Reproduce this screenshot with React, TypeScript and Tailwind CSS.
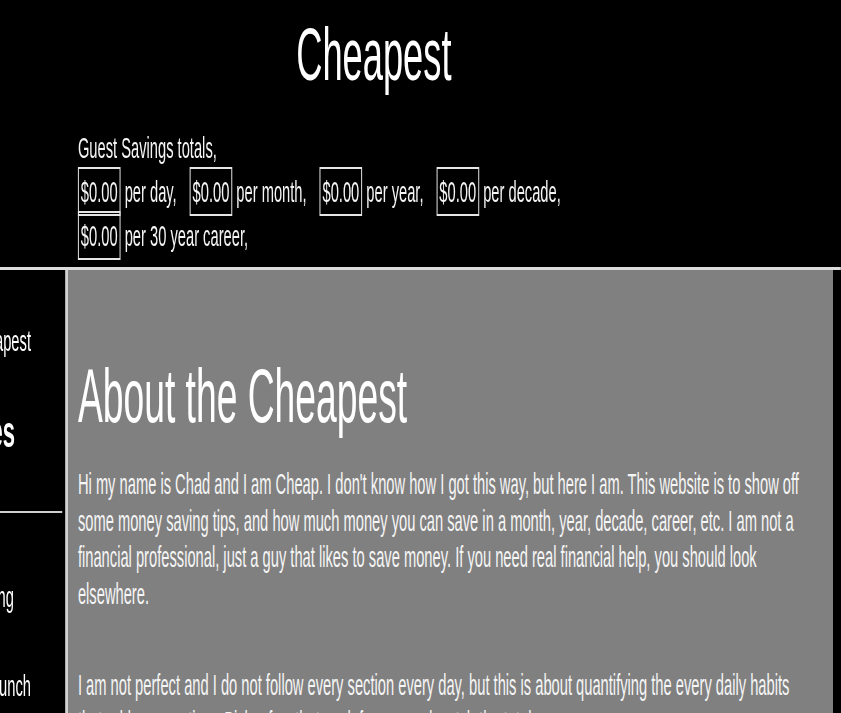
import React from 'react'

// the page is laid out at its natural width, then squeezed horizontally like the screenshot
const totals = [
  { amount: '$0.00', label: 'per day,' },
  { amount: '$0.00', label: 'per month,' },
  { amount: '$0.00', label: 'per year,' },
  { amount: '$0.00', label: 'per decade,' },
]

function Amount({ value }: { value: string }) {
  return <span className="border-2 border-[#e6e6e6] px-[4px] py-[6px]">{value}</span>
}

export default function App() {
  return (
    <div className="w-[841px] h-[713px] overflow-hidden bg-black font-['Liberation_Sans',Arial,sans-serif]">
      <div className="w-[1716px] origin-top-left scale-x-[0.49] text-white">
        <header className="pt-[18px] pb-[9px] border-b-[3px] border-[#dcdcdc]">
          <h1 className="w-[1526px] text-center text-[74px] leading-none">Cheapest</h1>
          <div className="mt-[34px] pl-[159px] text-[30px] leading-[44px] text-[#f4f4f4]">
            Guest Savings totals,
            <br />
            {totals.map((t, i) => (
              <span key={i} className={i < totals.length - 1 ? 'mr-[18px]' : ''}>
                <Amount value={t.amount} /> {t.label}{' '}
              </span>
            ))}
            <br />
            <Amount value="$0.00" /> per 30 year career,
          </div>
        </header>

        <div className="flex min-h-[500px]">
          <aside className="w-[139px] shrink-0 overflow-hidden border-r-[6px] border-[#d2d2d2]">
            <div className="-ml-[202px] w-[335px] pr-[6px] pt-[53px] whitespace-nowrap">
              <a className="block text-[30px] leading-[36px]">About the Cheapest</a>
              <h2 className="mt-[47px] text-[45px] leading-[52px] font-bold">Categories</h2>
              <hr className="mt-[53px] border-0 border-t-2 border-[#cfcfcf]" />
              <a className="block mt-[66px] text-[30px] leading-[36px]">Budget Shopping</a>
              <a className="block mt-[53px] text-[30px] leading-[36px]">Packing Your Lunch</a>
              <a className="block mt-[53px] text-[30px] leading-[36px]">Coffee at Home</a>
            </div>
          </aside>

          <main className="w-[1561px] shrink-0 bg-[#808080] pl-[20px] pr-[37px] pt-[88px] text-[#f5f5f5]">
            <h1 className="text-[76px] leading-none text-white">About the Cheapest</h1>
            <p className="mt-[32px] text-[30px] leading-[36.7px]">
              Hi my name is Chad and I am Cheap. I don't know how I got this way, but here I am. This website
              is to show off some money saving tips, and how much money you can save in a month, year, decade,
              career, etc. I am not a financial professional, just a guy that likes to save money. If you need
              real financial help, you should look elsewhere.
            </p>
            <p className="mt-[54px] text-[30px] leading-[36.7px]">
              I am not perfect and I do not follow every section every day, but this is about quantifying the
              every daily habits that add up over time. Pick a few that work for you and watch the totals grow.
            </p>
          </main>
        </div>
      </div>
    </div>
  )
}
